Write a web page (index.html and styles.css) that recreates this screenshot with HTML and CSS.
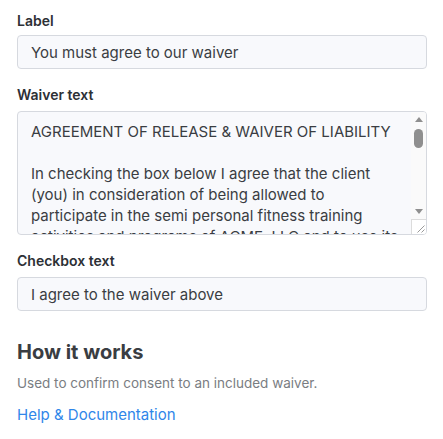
FILE: index.html
```html
<!DOCTYPE html>
<html>
<head>
<meta charset="utf-8">
<link rel="stylesheet" href="styles.css">
</head>
<body>
<div class="panel">
  <div class="field field-first">
    <label class="field-label">Label</label>
    <input class="text-input" type="text" value="You must agree to our waiver">
  </div>
  <div class="field">
    <label class="field-label">Waiver text</label>
    <div class="textarea-box">
      <textarea class="text-area">AGREEMENT OF RELEASE &amp; WAIVER OF LIABILITY

In checking the box below I agree that the client (you) in consideration of being allowed to participate in the semi personal fitness training activities and programs of ACME, LLC and to use its facilities, equipment and machinery, do hereby waive, release and forever discharge ACME, LLC and its officers, agents, employees, representatives, executors, and all others from any and all responsibilities or liability for injuries or damages resulting from my participation.</textarea>
      <div class="scrollbar">
        <div class="sb-btn">
          <svg width="8" height="5" viewBox="0 0 8 5"><path d="M4 0 L8 5 L0 5 Z" fill="#8f8f8f"/></svg>
        </div>
        <div class="sb-track"><div class="sb-thumb"></div></div>
        <div class="sb-btn">
          <svg width="8" height="5" viewBox="0 0 8 5"><path d="M0 0 L8 0 L4 5 Z" fill="#8f8f8f"/></svg>
        </div>
        <div class="sb-corner">
          <svg width="14" height="14" viewBox="0 0 14 14"><path d="M12.5 5.5 L5.5 12.5 M12.5 9.5 L9.5 12.5" stroke="#9a9a9a" stroke-width="1" fill="none"/></svg>
        </div>
      </div>
    </div>
  </div>
  <div class="field">
    <label class="field-label">Checkbox text</label>
    <input class="text-input" type="text" value="I agree to the waiver above">
  </div>
  <section class="info">
    <h2 class="info-title">How it works</h2>
    <p class="info-text">Used to confirm consent to an included waiver.</p>
    <a class="info-link" href="#">Help &amp; Documentation</a>
  </section>
</div>
</body>
</html>
```
FILE: styles.css
```css
html, body {
  margin: 0;
  padding: 0;
  background: #ffffff;
}
body {
  font-family: Inter, "Noto Sans", sans-serif;
  color: #333840;
}
.panel {
  padding: 11px 16px 0 17px;
  display: flex;
  flex-direction: column;
  gap: 16px;
}
.field {
  display: flex;
  flex-direction: column;
  gap: 6px;
}
.field-first {
  gap: 4px;
}
.field-label {
  font-size: 14px;
  font-weight: 600;
  line-height: 20px;
  color: #2d3035;
}
.text-input,
.textarea-box {
  box-sizing: border-box;
  width: 100%;
  background: #f8f9fc;
  border: 1px solid #d6d9df;
  border-radius: 4px;
}
.text-input,
.text-area {
  margin: 0;
  font-family: Inter, "Noto Sans", sans-serif;
  font-size: 15px;
  color: #3a3d42;
  outline: none;
}
.text-input {
  height: 34px;
  padding: 0 13px;
}
.textarea-box {
  height: 124px;
  display: flex;
  overflow: hidden;
}
.text-area {
  flex: 1;
  min-width: 0;
  box-sizing: border-box;
  height: 100%;
  padding: 9px 13px;
  border: none;
  background: transparent;
  line-height: 21px;
  resize: none;
  overflow: hidden;
}
.scrollbar {
  width: 15px;
  flex: none;
  display: flex;
  flex-direction: column;
  background: #fafafa;
}
.sb-btn {
  height: 15px;
  flex: none;
  display: flex;
  align-items: center;
  justify-content: center;
}
.sb-btn svg {
  display: block;
}
.sb-track {
  flex: 1;
  padding: 2px 3px;
}
.sb-thumb {
  width: 9px;
  height: 19px;
  border-radius: 5px;
  background: #8f8f8f;
}
.sb-corner {
  height: 15px;
  flex: none;
  box-sizing: border-box;
  background: #ffffff;
  border-top: 1px solid #dcdcdc;
  border-left: 1px solid #dcdcdc;
}
.sb-corner svg {
  display: block;
}
.info {
  margin-top: 12px;
}
.info-title {
  margin: 0;
  font-size: 20px;
  line-height: 26px;
  font-weight: 700;
  color: #3a3d42;
}
.info-text {
  margin: 9px 0 0;
  font-size: 13.5px;
  line-height: 18px;
  color: #7a7d82;
}
.info-link {
  display: inline-block;
  margin-top: 13px;
  font-size: 15px;
  line-height: 20px;
  color: #2f86e9;
  text-decoration: none;
}
```
